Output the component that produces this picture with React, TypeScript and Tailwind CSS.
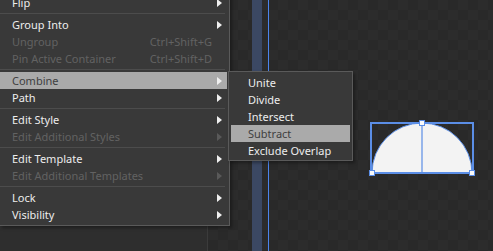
type Item =
  | { sep: true }
  | { sep?: false; label: string; shortcut?: string; arrow?: boolean; disabled?: boolean; active?: boolean };

const mainItems: Item[] = [
  { label: 'Flip', arrow: true },
  { sep: true },
  { label: 'Group Into', arrow: true },
  { label: 'Ungroup', shortcut: 'Ctrl+Shift+G', disabled: true },
  { label: 'Pin Active Container', shortcut: 'Ctrl+Shift+D', disabled: true },
  { sep: true },
  { label: 'Combine', arrow: true, active: true },
  { label: 'Path', arrow: true },
  { sep: true },
  { label: 'Edit Style', arrow: true },
  { label: 'Edit Additional Styles', arrow: true, disabled: true },
  { sep: true },
  { label: 'Edit Template', arrow: true },
  { label: 'Edit Additional Templates', arrow: true, disabled: true },
  { sep: true },
  { label: 'Lock', arrow: true },
  { label: 'Visibility', arrow: true },
];

const subItems = ['Unite', 'Divide', 'Intersect', 'Subtract', 'Exclude Overlap'];

function Arrow({ dim }: { dim?: boolean }) {
  return (
    <svg width="5" height="8" viewBox="0 0 5 8" className="shrink-0">
      <path d="M0 0 L5 4 L0 8 Z" fill={dim ? '#595959' : '#f0f0f0'} />
    </svg>
  );
}

function MainMenu() {
  return (
    <div className="absolute left-0 top-[-8px] w-[230px] bg-[#393939] border-r border-b border-[#5a5a5a] py-[2px] shadow-[2px_2px_3px_rgba(0,0,0,0.35)]">
      {mainItems.map((it, i) =>
        it.sep ? (
          <div key={i} className="h-[5px] flex items-center mr-[4px]">
            <div className="h-px w-full bg-[#4c4c4c]" />
          </div>
        ) : (
          <div
            key={i}
            className={
              'h-[17px] flex items-center pl-[12px] pr-[5px] mr-[2px] ' +
              (it.active ? 'bg-[#aaaaaa] text-[#404040]' : it.disabled ? 'text-[#626262]' : 'text-[#ededed]')
            }
          >
            <span className="flex-1 whitespace-nowrap">{it.label}</span>
            {it.shortcut && <span className="whitespace-nowrap mr-[5px]">{it.shortcut}</span>}
            <div className="w-[5px] flex items-center">{it.arrow && <Arrow dim={it.disabled} />}</div>
          </div>
        )
      )}
    </div>
  );
}

function SubMenu() {
  return (
    <div className="absolute left-[228px] top-[71px] w-[125px] bg-[#393939] border border-[#5a5a5a] pt-[2px] pb-[1px] shadow-[2px_2px_3px_rgba(0,0,0,0.35)]">
      {subItems.map((s) => (
        <div
          key={s}
          className={
            'h-[17px] flex items-center pl-[17px] mx-[2px] whitespace-nowrap ' +
            (s === 'Subtract' ? 'bg-[#aaaaaa] text-[#404040]' : 'text-[#ededed]')
          }
        >
          {s}
        </div>
      ))}
    </div>
  );
}

function Shape() {
  return (
    <svg className="absolute left-[368px] top-[119px]" width="108" height="60" viewBox="0 0 108 60">
      <path d="M4 54 A50 50 0 0 1 104 54 Z" fill="#f3f3f3" />
      <path d="M4 54 A50 50 0 0 1 104 54" fill="none" stroke="#5b8ee6" strokeWidth="1" />
      <rect x="3" y="4" width="102" height="50" fill="none" stroke="#5b8ee6" strokeWidth="2" />
      <line x1="54" y1="4" x2="54" y2="54" stroke="#5b8ee6" strokeWidth="1.2" />
      <rect x="51.5" y="1.5" width="5" height="5" fill="#fafafa" stroke="#5b8ee6" strokeWidth="1" />
      <rect x="1.5" y="51.5" width="5" height="5" fill="#fafafa" stroke="#5b8ee6" strokeWidth="1" />
      <rect x="101.5" y="51.5" width="5" height="5" fill="#fafafa" stroke="#5b8ee6" strokeWidth="1" />
    </svg>
  );
}

export default function App() {
  return (
    <div
      className="relative w-[493px] h-[251px] overflow-hidden flex text-[11px] leading-none"
      style={{ fontFamily: '"Noto Sans", "Open Sans", sans-serif' }}
    >
      {/* side panel */}
      <div className="w-[208px] h-full bg-[#2e2e2e] border-r border-[#3b3b3b]" />

      {/* canvas */}
      <div className="relative flex-1 h-full bg-[conic-gradient(#2c2c2c_25%,#292929_0_50%,#2c2c2c_0_75%,#292929_0)] bg-[length:20px_20px]">
        <div className="absolute left-[44px] top-0 h-full w-[10px] bg-[#3b4863]" />
        <div className="absolute left-[60px] top-0 h-full w-px bg-[#4b84ec]" />
      </div>

      <Shape />
      <MainMenu />
      <SubMenu />
    </div>
  );
}
